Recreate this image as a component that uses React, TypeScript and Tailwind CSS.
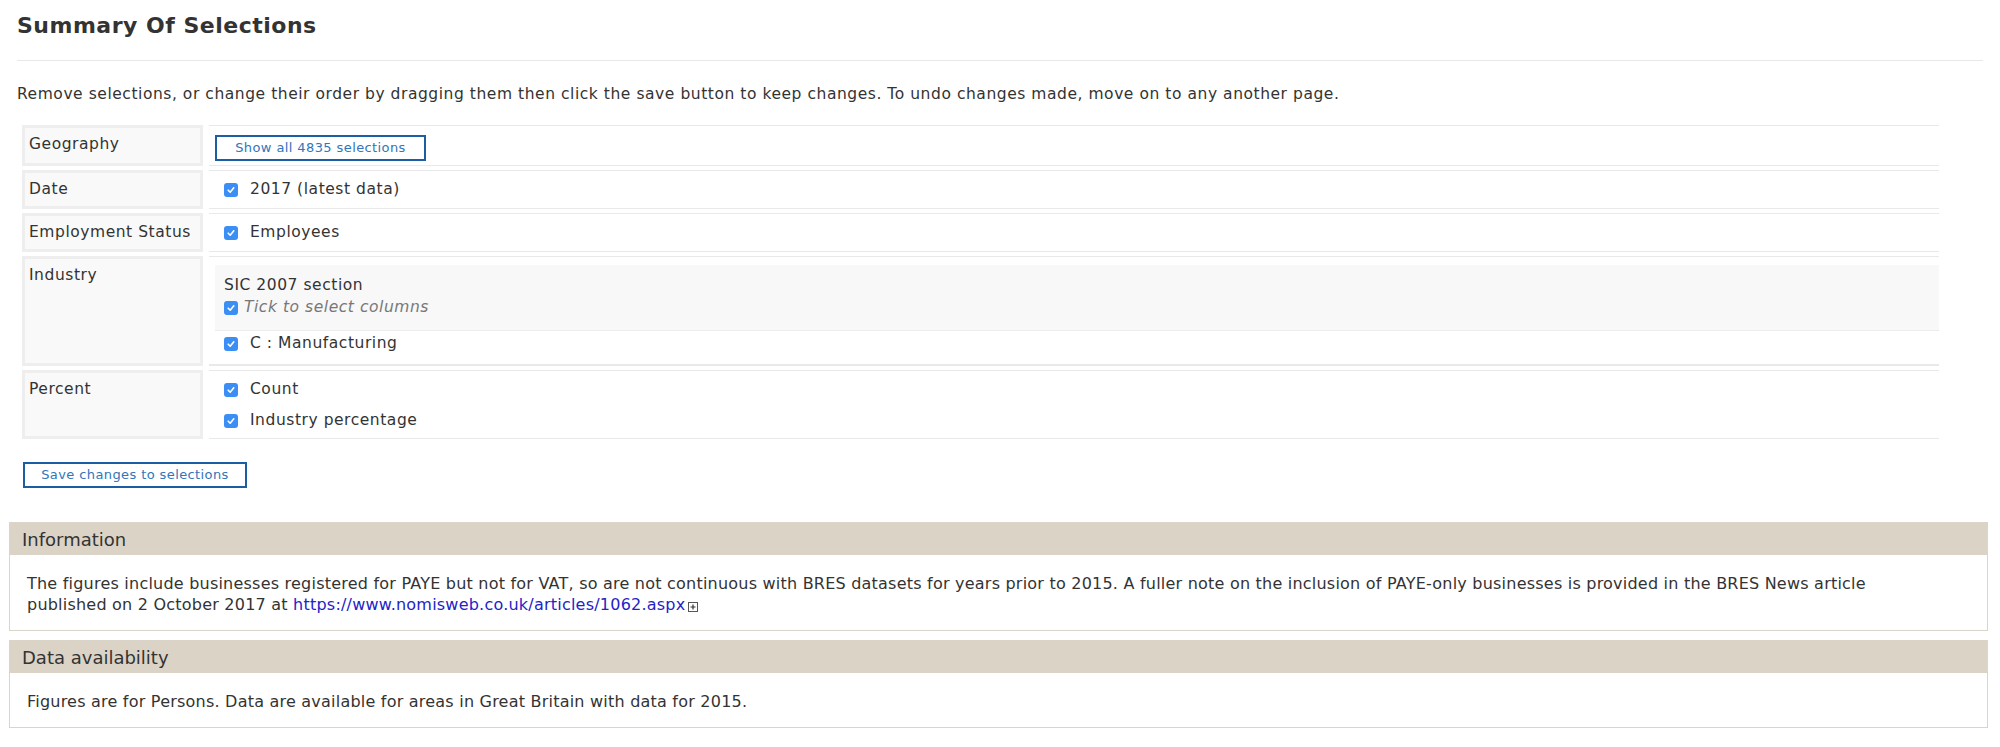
const verdana = { fontFamily: '"DejaVu Sans", Verdana, sans-serif' };
const tahoma = { fontFamily: '"DejaVu Sans", Tahoma, sans-serif' };

function Check() {
  return (
    <span className="inline-flex w-[14px] h-[14px] rounded-[3px] bg-[#3b8ef3] items-center justify-center shrink-0">
      <svg width="10" height="10" viewBox="0 0 10 10">
        <path d="M2.2 5.2 L4.2 7.2 L7.8 2.8" fill="none" stroke="#fff" strokeWidth="1.6" strokeLinecap="round" strokeLinejoin="round" />
      </svg>
    </span>
  );
}

function CheckItem({ label, italic }: { label: string; italic?: boolean }) {
  return (
    <div className={`flex items-center h-[20px] ${italic ? "gap-[6px]" : "gap-[12px]"}`}>
      <Check />
      <span className={italic ? "italic text-[#777]" : ""}>{label}</span>
    </div>
  );
}

function Row({ label, children, valueClass }: { label: string; children: React.ReactNode; valueClass?: string }) {
  return (
    <div className="flex gap-[6px]">
      <div className="w-[181px] shrink-0 border-[3px] border-[#eeeeee] bg-[#f9f9f9] pt-[6px] px-[4px] leading-[20px]">
        {label}
      </div>
      <div className={`flex-1 border-y border-[#e9e9e9] ${valueClass ?? "pl-[15px] pt-[9px] pb-[8px]"}`}>
        {children}
      </div>
    </div>
  );
}

function Panel({ title, children }: { title: string; children: React.ReactNode }) {
  return (
    <div className="border border-[#dbd4c9]" style={tahoma}>
      <div className="bg-[#dbd3c6] h-[32px] flex items-center pl-[12px] text-[18px] text-[#333]">{title}</div>
      <div className="px-[17px] pt-[18px] pb-[15px] text-[16px] tracking-[0.22px] leading-[21px] text-[#333] bg-white">{children}</div>
    </div>
  );
}

function BlueButton({ label, width }: { label: string; width: string }) {
  return (
    <button className={`flex items-center justify-center h-[26px] ${width} border-2 border-[#1b5ea6] bg-white text-[#3275ba] text-[13px] leading-[16px] tracking-[0.4px] whitespace-nowrap`}>
      {label}
    </button>
  );
}

export default function App() {
  return (
    <div className="w-[2000px] bg-white text-[#333] pb-[20px]">
      <div className="px-[17px] pt-[12px]" style={verdana}>
        <h2 className="text-[22px] font-bold tracking-[0.5px] leading-[28px] text-[#333] pb-[20px] border-b border-[#e8e8e8]">
          Summary Of Selections
        </h2>
        <p className="text-[15.5px] tracking-[0.55px] leading-[20px] mt-[23px]">
          Remove selections, or change their order by dragging them then click the save button to keep changes. To undo changes made, move on to any another page.
        </p>

        <div className="mt-[21px] ml-[5px] w-[1917px] flex flex-col gap-[4px] text-[15.5px] tracking-[0.55px] text-[#333]">
          <Row label="Geography" valueClass="flex pl-[6px] pt-[9px] pb-[4px]">
            <BlueButton label="Show all 4835 selections" width="w-[211px]" />
          </Row>
          <Row label="Date">
            <CheckItem label="2017 (latest data)" />
          </Row>
          <Row label="Employment Status">
            <CheckItem label="Employees" />
          </Row>
          <Row label="Industry" valueClass="pt-[8px] pb-[10px] border-b-2">
            <div className="ml-[6px] bg-[#f8f8f8] border-b border-[#ececec] pl-[9px] pt-[10px] pb-[12px] flex flex-col gap-[3px]">
              <div className="leading-[20px]">SIC 2007 section</div>
              <CheckItem label="Tick to select columns" italic />
            </div>
            <div className="pl-[15px] pt-[3px]">
              <CheckItem label="C : Manufacturing" />
            </div>
          </Row>
          <Row label="Percent" valueClass="pl-[15px] pt-[9px] pb-[7px]">
            <div className="flex flex-col gap-[11px]">
              <CheckItem label="Count" />
              <CheckItem label="Industry percentage" />
            </div>
          </Row>
        </div>

        <div className="flex mt-[23px] ml-[6px]">
          <BlueButton label="Save changes to selections" width="w-[224px]" />
        </div>
      </div>

      <div className="mx-[9px] mt-[34px] w-[1979px] flex flex-col gap-[9px]">
        <Panel title="Information">
          <p className="max-w-[1880px]">
            The figures include businesses registered for PAYE but not for VAT, so are not continuous with BRES datasets for years prior to 2015. A fuller note on the inclusion of PAYE-only businesses is provided in the BRES News article published on 2 October 2017 at{" "}
            <a href="#" className="text-[#2323c8]">https://www.nomisweb.co.uk/articles/1062.aspx</a>
            <span className="inline-flex items-center justify-center w-[10px] h-[10px] border border-[#555] ml-[3px] align-[-1px]">
              <svg width="8" height="8" viewBox="0 0 8 8">
                <path d="M4 1.5 V6.5 M1.5 4 H6.5" stroke="#333" strokeWidth="1.2" />
              </svg>
            </span>
          </p>
        </Panel>
        <Panel title="Data availability">
          <p>Figures are for Persons. Data are available for areas in Great Britain with data for 2015.</p>
        </Panel>
      </div>
    </div>
  );
}
